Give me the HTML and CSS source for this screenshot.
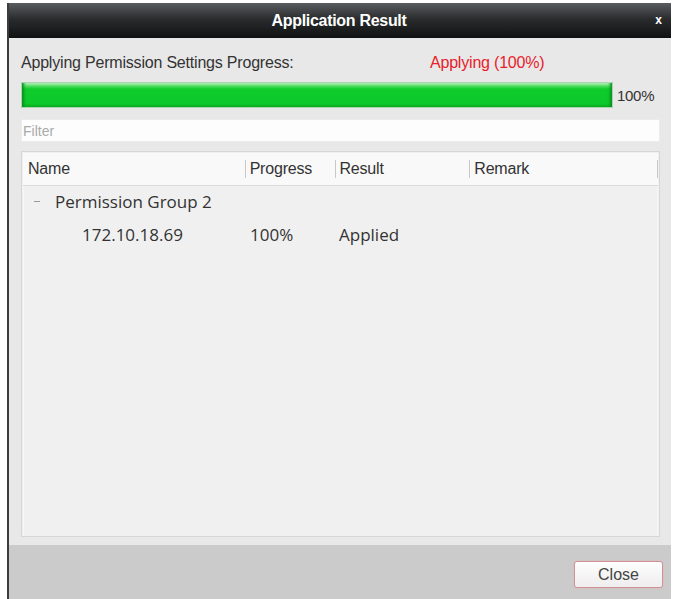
FILE: index.html
```html
<!DOCTYPE html>
<html lang="en">
<head>
<meta charset="UTF-8">
<title>Application Result</title>
<link rel="stylesheet" href="styles.css">
</head>
<body>

<div class="window">
    <div class="titlebar">
        <span class="title">Application Result</span>
        <span class="close-x">x</span>
    </div>

    <div class="content">
        <div class="status-row">
            <span class="status-label">Applying Permission Settings Progress:</span>
            <span class="status-value">Applying (100%)</span>
        </div>

        <div class="progress-row">
            <div class="progress-bar">
                <div class="progress" style="width:100%"></div>
            </div>
            <span class="progress-text">100%</span>
        </div>

        <input class="filter" type="text" placeholder="Filter">

        <!-- result table -->
        <div class="table">
            <div class="table-head">
                <div class="col col-name">Name</div>
                <div class="col col-progress sep">Progress</div>
                <div class="col col-result sep">Result</div>
                <div class="col col-remark sep">Remark</div>
                <div class="col col-end sep"></div>
            </div>
            <div class="table-body">
                <div class="row group-row">
                    <span class="toggle"></span>
                    <span>Permission Group 2</span>
                </div>
                <div class="row item-row">
                    <span class="cell-name">172.10.18.69</span>
                    <span class="cell-progress">100%</span>
                    <span class="cell-result">Applied</span>
                </div>
            </div>
        </div>
    </div>

    <div class="footer">
        <button class="btn">Close</button>
    </div>
</div>

</body>
</html>
```

FILE: styles.css
```css
body {
    margin: 0;
    background: #fff;
    font-family: "Liberation Sans", Arial, sans-serif;
    color: #333;
}
.window {
    margin-left: 7px;
    margin-top: 3px;
    width: 664px;
    height: 596px;
    border-left: 2px solid #3c3c3c;
    box-sizing: border-box;
    display: flex;
    flex-direction: column;
    background: #e8e8e8;
}
.titlebar {
    height: 35px;
    background: linear-gradient(#5a5d60, #2a2c2e 45%, #101112);
    display: flex;
    align-items: center;
    justify-content: center;
    position: relative;
}
.title {
    color: #fff;
    font-weight: bold;
    font-size: 16px;
    letter-spacing: -0.3px;
    margin-left: -2px;
}
.close-x {
    position: absolute;
    right: 9px;
    top: 10px;
    color: #fff;
    font-size: 12px;
    font-weight: bold;
}
.content {
    flex: 1;
    padding: 16px 9px 8px 12px;
    display: flex;
    flex-direction: column;
}
.status-row {
    display: flex;
    font-size: 16px;
    line-height: 18px;
    height: 18px;
    letter-spacing: -0.2px;
}
.status-label { width: 409px; color: #333; }
.status-value { color: #e8202a; }
.progress-row {
    display: flex;
    align-items: center;
    margin-top: 10px;
    height: 26px;
}
.progress-bar {
    width: 592px;
    height: 26px;
    background: #ddd;
    box-sizing: border-box;
    border: 1px solid #a9d6ac;
}
.progress {
    height: 100%;
    background: linear-gradient(#c0f4c6 0, #52dc62 3px, #0fcc2c 6px, #0cc82a 85%, #0aab22);
    box-shadow: inset 4px 0 3px -2px #0a8f1e, inset -4px 0 3px -2px #0a8f1e;
}
.progress-text {
    font-size: 15px;
    margin-left: 4px;
    color: #333;
    letter-spacing: -0.3px;
}
.filter {
    margin-top: 11px;
    height: 23px;
    width: 639px;
    box-sizing: border-box;
    border: 1px solid #ececec;
    background: #fdfdfd;
    font-family: "Liberation Sans", Arial, sans-serif;
    font-size: 14px;
    padding: 0 1px;
    outline: none;
}
.filter::placeholder { color: #aaa; }
.table {
    margin-top: 9px;
    width: 639px;
    flex: 1;
    box-sizing: border-box;
    border: 1px solid #d6d6d6;
    background: #f0f0f0;
    padding: 1px;
    display: flex;
    flex-direction: column;
}
.table-head {
    height: 32px;
    display: flex;
    align-items: center;
    background: #f9f9f9;
    border-bottom: 1px solid #dadada;
    font-size: 16px;
    letter-spacing: -0.2px;
    color: #333;
}
.col { height: 18px; line-height: 18px; box-sizing: border-box; }
.sep { border-left: 1px solid #c8c8c8; padding-left: 4px; }
.col-name { width: 222px; padding-left: 5px; }
.col-progress { width: 90px; }
.col-result { width: 135px; }
.col-remark { width: 188px; }
.col-end { width: 1px; padding: 0; }
.table-body {
    flex: 1;
    border-left: 1px solid #f6f6f6;
    border-right: 1px solid #f6f6f6;
    font-family: "Open Sans", "Noto Sans", sans-serif;
    font-size: 17px;
    color: #333;
}
.row {
    display: flex;
    align-items: center;
}
.group-row { padding-left: 8px; height: 30px; }
.item-row { height: 36px; }
.toggle {
    width: 10px;
    height: 10px;
    margin-right: 13px;
    position: relative;
}
.toggle::after {
    content: "";
    position: absolute;
    left: 2px;
    top: 5px;
    width: 6px;
    height: 1px;
    background: #999;
}
.cell-name { width: 168px; padding-left: 58px; }
.cell-progress { width: 89px; }
.cell-result { width: 100px; }
.footer {
    height: 54px;
    background: #cbcbcb;
    display: flex;
    align-items: center;
    justify-content: flex-end;
    padding-right: 8px;
}
.btn {
    width: 89px;
    height: 27px;
    margin-top: 5px;
    border: 1px solid #cf9297;
    border-radius: 3px;
    background: linear-gradient(#fefefe, #efeded);
    box-shadow: 0 0 2px #e8b0b4;
    font-family: "Liberation Sans", Arial, sans-serif;
    font-size: 16px;
    color: #444;
    cursor: pointer;
}
```
